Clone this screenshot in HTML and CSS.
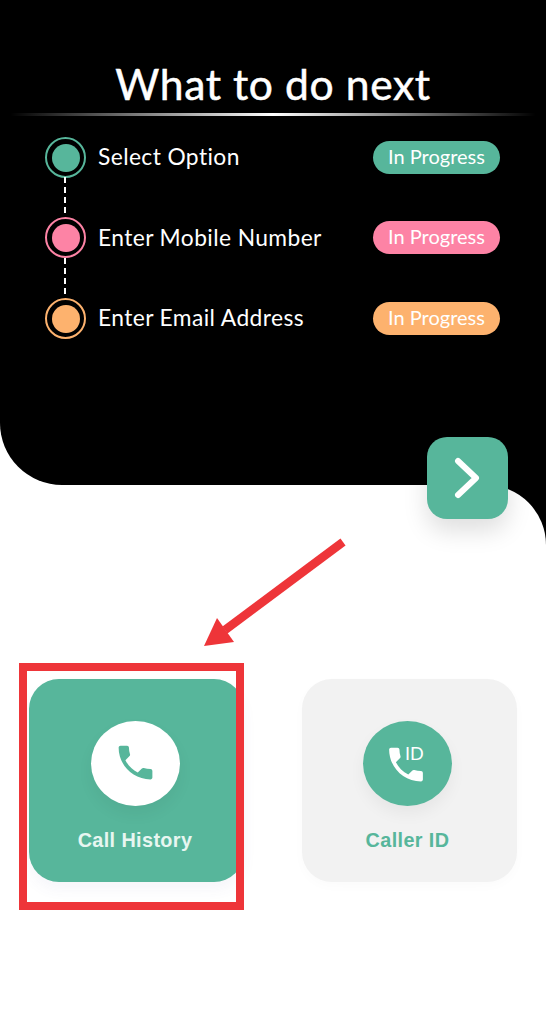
FILE: index.html
```html
<!DOCTYPE html>
<html lang="en">
<head>
  <meta charset="UTF-8" />
  <meta name="viewport" content="width=device-width, initial-scale=1.0"/>
  <title>What to do next</title>
  <link rel="stylesheet" href="styles.css">
</head>
<body>

  <div class="screen">
    <header class="hero">
      <h1 class="title">What to do next</h1>
      <div class="divider"></div>

      <ul class="steps">
        <li class="step green">
          <span class="dot"></span>
          <span class="label">Select Option</span>
          <span class="pill">In Progress</span>
        </li>
        <li class="step pink">
          <span class="dot"></span>
          <span class="label">Enter Mobile Number</span>
          <span class="pill">In Progress</span>
        </li>
        <li class="step orange">
          <span class="dot"></span>
          <span class="label">Enter Email Address</span>
          <span class="pill">In Progress</span>
        </li>
      </ul>
    </header>

    <button class="next" aria-label="Next">
      <svg width="30" height="42" viewBox="0 0 30 42">
        <path d="M5 4 L23 21 L5 38" fill="none" stroke="#fff" stroke-width="6" stroke-linecap="round" stroke-linejoin="round"/>
      </svg>
    </button>

    <main class="panel">
      <div class="panel-inner">
        <svg class="arrow" width="160" height="120" viewBox="0 0 160 120">
          <path d="M143 7 L25 95" stroke="#ee3539" stroke-width="8.5" fill="none"/>
          <path d="M4 111 L17 83 L34 107 Z" fill="#ee3539"/>
        </svg>

        <div class="options">
          <div class="card active">
            <span class="circle">
              <svg class="call-icon" width="45" height="45" viewBox="0 0 24 24">
                <path class="phone" d="M6.62 10.79c1.44 2.83 3.76 5.14 6.59 6.59l2.2-2.2c.27-.27.67-.36 1.02-.24 1.12.37 2.33.57 3.57.57.55 0 1 .45 1 1V20c0 .55-.45 1-1 1-9.39 0-17-7.61-17-17 0-.55.45-1 1-1h3.5c.55 0 1 .45 1 1 0 1.25.2 2.45.57 3.57.11.35.03.74-.25 1.02l-2.2 2.2z"/>
              </svg>
            </span>
            <span class="card-name">Call History</span>
            <span class="frame"></span>
          </div>

          <div class="card">
            <span class="circle">
              <svg class="id-icon" width="46" height="45" viewBox="0 0 24 24">
                <path class="phone" d="M6.62 10.79c1.44 2.83 3.76 5.14 6.59 6.59l2.2-2.2c.27-.27.67-.36 1.02-.24 1.12.37 2.33.57 3.57.57.55 0 1 .45 1 1V20c0 .55-.45 1-1 1-9.39 0-17-7.61-17-17 0-.55.45-1 1-1h3.5c.55 0 1 .45 1 1 0 1.25.2 2.45.57 3.57.11.35.03.74-.25 1.02l-2.2 2.2z"/>
              </svg>
              <span class="id-tag">ID</span>
            </span>
            <span class="card-name">Caller ID</span>
          </div>
        </div>
      </div>
    </main>
  </div>

</body>
</html>
```

FILE: styles.css
```css
* {
  box-sizing: border-box;
}

body {
  margin: 0;
  background: #ffffff;
  font-family: 'Lato', sans-serif;
}

.screen {
  position: relative;
  height: 1024px;
  overflow: hidden;
  display: flex;
  flex-direction: column;
}

.hero {
  height: 485px;
  padding-top: 54px;
  background: #000000;
  border-bottom-left-radius: 62px;
  color: #ffffff;
}

.title {
  margin: 0;
  height: 60px;
  line-height: 60px;
  text-align: center;
  font-size: 42.6px;
  font-weight: 400;
  letter-spacing: 0.6px;
  -webkit-text-stroke: 0.5px #ffffff;
}

.divider {
  height: 3px;
  margin: -1px 10px 0;
  background: linear-gradient(90deg, transparent, #ffffff 50%, transparent);
}

.steps {
  list-style: none;
  margin: 20.5px 0 0;
  padding: 0 46px 0 45px;
  display: flex;
  flex-direction: column;
  gap: 39.5px;
}

.step {
  display: flex;
  align-items: center;
  height: 41px;
}

.step.green { --tone: #57b69b; }
.step.pink { --tone: #fd83a5; }
.step.orange { --tone: #fdb26e; }

.dot {
  position: relative;
  flex: none;
  width: 41px;
  height: 41px;
  border: 2.5px solid var(--tone);
  border-radius: 50%;
  background: var(--tone);
  background-clip: content-box;
  padding: 4.5px;
}

.step:not(:last-child) .dot::after {
  content: '';
  position: absolute;
  left: 17px;
  top: 38.5px;
  width: 2px;
  height: 39px;
  background: repeating-linear-gradient(#ffffff 0 6px, transparent 6px 10px);
}

.label {
  flex: 1;
  margin-left: 12px;
  margin-top: -2px;
  font-size: 22.8px;
  letter-spacing: 0.4px;
}

.pill {
  flex: none;
  width: 127px;
  height: 33px;
  line-height: 31px;
  text-align: center;
  border-radius: 17px;
  background: var(--tone);
  font-size: 20px;
}

.next {
  position: absolute;
  left: 427px;
  top: 437px;
  z-index: 2;
  width: 81px;
  height: 82px;
  padding: 0;
  border: none;
  border-radius: 20px;
  background: #57b69b;
  box-shadow: 0 12px 24px rgba(0,0,0,0.13);
  display: flex;
  justify-content: center;
  align-items: center;
}

.panel {
  flex: 1;
  background: #000000;
  display: flex;
}

.panel-inner {
  position: relative;
  flex: 1;
  background: #ffffff;
  border-top-right-radius: 60px;
  padding: 194px 29px 0;
}

.arrow {
  position: absolute;
  left: 200px;
  top: 50px;
}

.options {
  display: grid;
  grid-template-columns: 215px 215px;
  gap: 58px;
}

.card {
  position: relative;
  height: 203px;
  padding: 42px 4px 0 0;
  border-radius: 30px;
  background: #f2f2f2;
  box-shadow: 0 4px 12px rgba(0,0,0,0.02);
  display: flex;
  flex-direction: column;
  align-items: center;
}

.card.active {
  padding-right: 3px;
  background: #57b69b;
  box-shadow: 0 8px 14px rgba(80,80,160,0.05);
}

.circle {
  position: relative;
  width: 89px;
  height: 85px;
  border-radius: 50%;
  background: #57b69b;
  box-shadow: 0 8px 16px rgba(0,0,0,0.05);
  display: flex;
  justify-content: center;
  align-items: center;
}

.phone {
  fill: #ffffff;
}

.active .circle {
  background: #ffffff;
}

.active .phone {
  fill: #57b69b;
}

.call-icon {
  margin-top: -2px;
}

.id-icon {
  margin: 2px 3px 0 0;
}

.id-tag {
  position: absolute;
  left: 42px;
  top: 23px;
  color: #ffffff;
  font-size: 18px;
  line-height: 18px;
}

.card-name {
  margin-top: 23px;
  font-family: 'Liberation Sans', sans-serif;
  font-size: 19.8px;
  font-weight: 700;
  line-height: 22px;
  letter-spacing: 0.4px;
  color: #57b69b;
}

.active .card-name {
  color: #e8f6f1;
}

.frame {
  position: absolute;
  left: -10px;
  top: -16px;
  right: 0;
  bottom: -28px;
  border: 8px solid #ee3539;
}
```
